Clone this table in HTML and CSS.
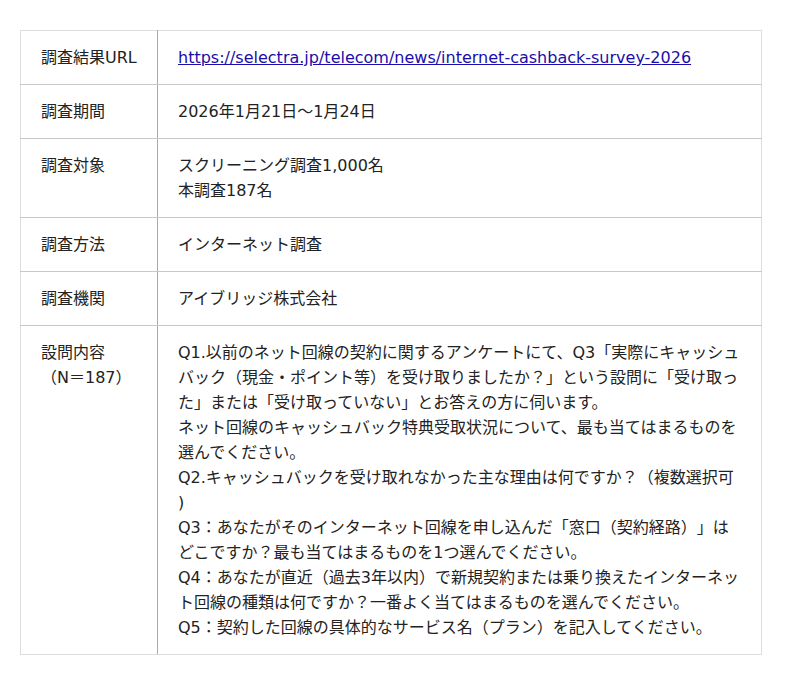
FILE: index.html
```html
<!DOCTYPE html>
<html lang="ja">
<head>
    <meta charset="UTF-8">
    <meta name="viewport" content="width=device-width, initial-scale=1.0">
    <title>調査概要</title>
    <link rel="stylesheet" href="styles.css">
</head>
<body>
    <div class="wrapper">
        <table class="survey">
            <tr>
                <th>調査結果URL</th>
                <td><a href="https://selectra.jp/telecom/news/internet-cashback-survey-2026">https://selectra.jp/telecom/news/internet-cashback-survey-2026</a></td>
            </tr>
            <tr>
                <th>調査期間</th>
                <td>2026年1月21日～1月24日</td>
            </tr>
            <tr>
                <th>調査対象</th>
                <td>スクリーニング調査1,000名<br>本調査187名</td>
            </tr>
            <tr>
                <th>調査方法</th>
                <td>インターネット調査</td>
            </tr>
            <tr>
                <th>調査機関</th>
                <td>アイブリッジ株式会社</td>
            </tr>
            <tr>
                <th>設問内容<br>（N＝187）</th>
                <td>
                    Q1.以前のネット回線の契約に関するアンケートにて、Q3「実際にキャッシュバック（現金・ポイント等）を受け取りましたか？」という設問に「受け取った」または「受け取っていない」とお答えの方に伺います。<br>
                    ネット回線のキャッシュバック特典受取状況について、最も当てはまるものを選んでください。<br>
                    Q2.キャッシュバックを受け取れなかった主な理由は何ですか？（複数選択可 )<br>
                    Q3：あなたがそのインターネット回線を申し込んだ「窓口（契約経路）」はどこですか？最も当てはまるものを1つ選んでください。<br>
                    Q4：あなたが直近（過去3年以内）で新規契約または乗り換えたインターネット回線の種類は何ですか？一番よく当てはまるものを選んでください。<br>
                    Q5：契約した回線の具体的なサービス名（プラン）を記入してください。
                </td>
            </tr>
        </table>
    </div>
</body>
</html>
```

FILE: styles.css
```css
body {
    margin: 0;
    background: #fff;
    color: #222;
    font-family: "DejaVu Sans", "Noto Sans CJK JP", sans-serif;
    font-size: 16px;
    line-height: 25px;
    text-spacing-trim: space-all;
}
.wrapper {
    padding: 30px 20px;
}
.survey {
    width: 742px;
    border-collapse: collapse;
    border: 1px solid #ddd;
}
.survey th,
.survey td {
    padding: 14px 20px;
    text-align: left;
    vertical-align: top;
    font-weight: normal;
    border-top: 1px solid #c8c8c8;
    border-bottom: 1px solid #c8c8c8;
}
.survey tr:first-child th,
.survey tr:first-child td {
    border-top-color: #ddd;
}
.survey tr:last-child th,
.survey tr:last-child td {
    border-bottom-color: #ddd;
}
.survey th {
    width: 96px;
    border-left: 1px solid #ddd;
    border-right: 1px solid #aaa;
}
.survey td {
    border-right: 1px solid #ddd;
}
.survey a {
    color: #1a0dab;
}
```
